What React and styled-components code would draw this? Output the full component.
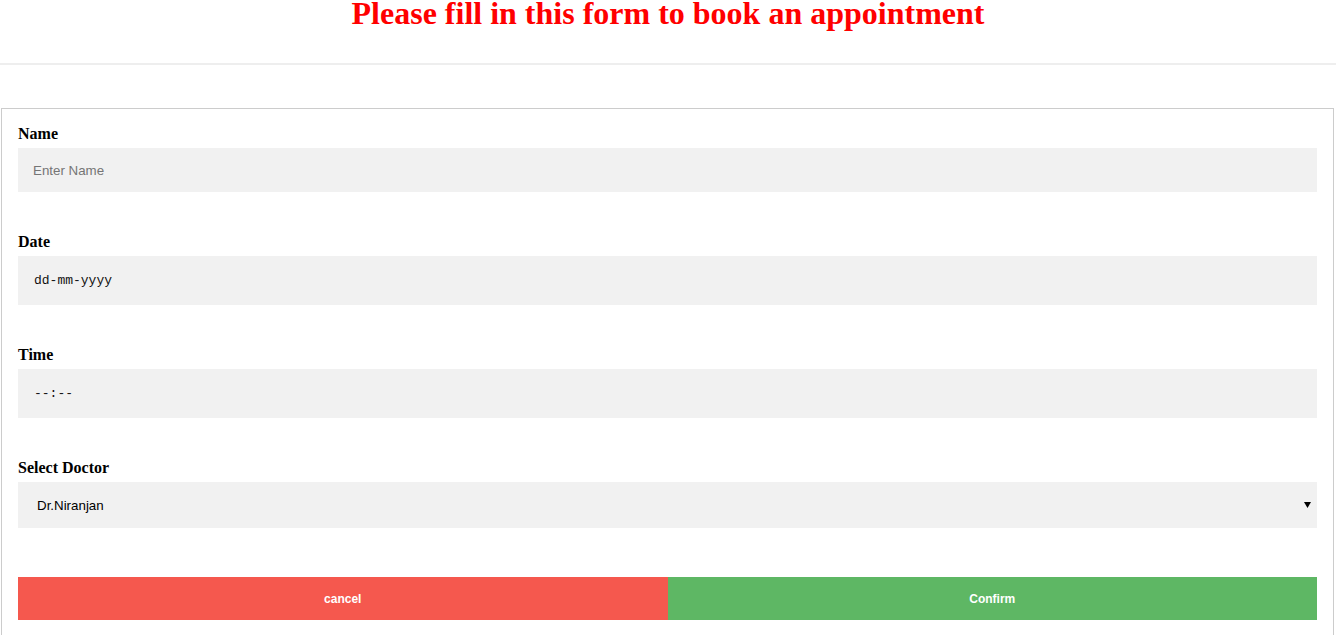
import React from 'react';
import styled, { createGlobalStyle } from 'styled-components';

const GlobalStyle = createGlobalStyle`
  html, body { margin: 0; padding: 0; background: #fff; }
  body { font-family: 'Liberation Sans', Arial, sans-serif; }
  * { box-sizing: border-box; }
`;

const Header = styled.header`
  height: 65px;
  padding-top: 1px;
  border-bottom: 2px solid #eeeeee;
  text-align: center;
`;

const Title = styled.h1`
  margin: 0;
  font-family: 'Liberation Serif', 'Times New Roman', serif;
  font-size: 32px;
  line-height: 24px;
  font-weight: bold;
  color: #ff0000;
`;

const Form = styled.form`
  margin: 43px 2px 0 1px;
  border: 1px solid #cccccc;
  border-bottom: none;
  padding: 16px 16px 20px;
`;

const Field = styled.div`
  margin-bottom: 41px;
`;

const Label = styled.label`
  display: block;
  margin-bottom: 5px;
  font-family: 'Liberation Serif', 'Times New Roman', serif;
  font-size: 16px;
  font-weight: bold;
  line-height: 18px;
  color: #000;
`;

const Input = styled.input`
  display: block;
  width: 100%;
  height: ${p => p.$h || 44}px;
  padding: 0 ${p => (p.$mono ? 16 : 15)}px;
  border: none;
  outline: none;
  background: #f1f1f1;
  font-family: ${p => (p.$mono ? "'Liberation Mono', 'Courier New', monospace" : "'Liberation Sans', Arial, sans-serif")};
  font-size: ${p => (p.$mono ? '13px' : '13.33px')};
  color: #000;

  &::placeholder {
    color: ${p => (p.$mono ? '#111' : '#757575')};
    opacity: 1;
  }
`;

const SelectWrap = styled.div`
  position: relative;
`;

const Select = styled.select`
  display: block;
  width: 100%;
  height: 46px;
  padding: 0 0 0 19px;
  border: none;
  outline: none;
  border-radius: 0;
  appearance: none;
  background: #f1f1f1;
  font-family: 'Liberation Sans', Arial, sans-serif;
  font-size: 13.33px;
  color: #000;
`;

const Arrow = styled.svg`
  position: absolute;
  right: 6px;
  top: 20px;
  pointer-events: none;
`;

const Buttons = styled.div`
  display: flex;
  margin-top: 49px;
`;

const Button = styled.button`
  flex: 1;
  height: 43px;
  border: none;
  background: ${p => p.$bg};
  color: #fff;
  font-family: 'Liberation Sans', Arial, sans-serif;
  font-size: 12px;
  font-weight: bold;
  cursor: pointer;
`;

const App = () => (
  <>
    <GlobalStyle />
    <Header>
      <Title>Please fill in this form to book an appointment</Title>
    </Header>
    <Form onSubmit={e => e.preventDefault()}>
      <Field>
        <Label>Name</Label>
        <Input type="text" placeholder="Enter Name" />
      </Field>
      <Field>
        <Label>Date</Label>
        <Input type="text" $mono $h={49} placeholder="dd-mm-yyyy" />
      </Field>
      <Field>
        <Label>Time</Label>
        <Input type="text" $mono $h={49} placeholder="--:--" />
      </Field>
      <Field>
        <Label>Select Doctor</Label>
        <SelectWrap>
          <Select defaultValue="Dr.Niranjan">
            <option>Dr.Niranjan</option>
          </Select>
          <Arrow width="7" height="6" viewBox="0 0 7 6">
            <path d="M0 0 H7 L3.5 6 Z" fill="#000" />
          </Arrow>
        </SelectWrap>
      </Field>
      <Buttons>
        <Button type="button" $bg="#f5584e">cancel</Button>
        <Button type="submit" $bg="#5eb764">Confirm</Button>
      </Buttons>
    </Form>
  </>
);

export default App;
